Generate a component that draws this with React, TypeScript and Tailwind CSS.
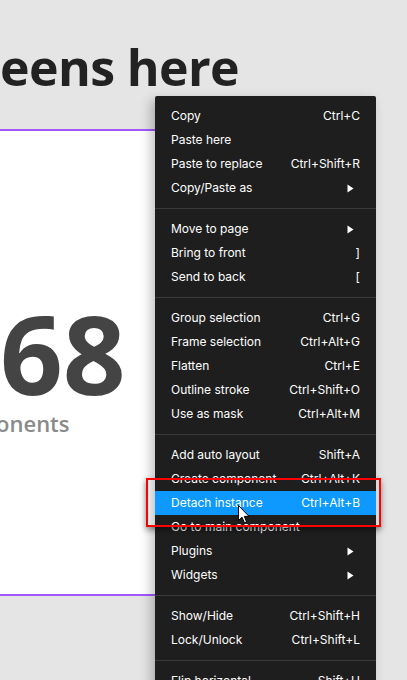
import React from "react"

type Item = { label: string; shortcut?: string; submenu?: boolean; active?: boolean }

const sections: Item[][] = [
  [
    { label: "Copy", shortcut: "Ctrl+C" },
    { label: "Paste here" },
    { label: "Paste to replace", shortcut: "Ctrl+Shift+R" },
    { label: "Copy/Paste as", submenu: true },
  ],
  [
    { label: "Move to page", submenu: true },
    { label: "Bring to front", shortcut: "]" },
    { label: "Send to back", shortcut: "[" },
  ],
  [
    { label: "Group selection", shortcut: "Ctrl+G" },
    { label: "Frame selection", shortcut: "Ctrl+Alt+G" },
    { label: "Flatten", shortcut: "Ctrl+E" },
    { label: "Outline stroke", shortcut: "Ctrl+Shift+O" },
    { label: "Use as mask", shortcut: "Ctrl+Alt+M" },
  ],
  [
    { label: "Add auto layout", shortcut: "Shift+A" },
    { label: "Create component", shortcut: "Ctrl+Alt+K" },
    { label: "Detach instance", shortcut: "Ctrl+Alt+B", active: true },
    { label: "Go to main component" },
    { label: "Plugins", submenu: true },
    { label: "Widgets", submenu: true },
  ],
  [
    { label: "Show/Hide", shortcut: "Ctrl+Shift+H" },
    { label: "Lock/Unlock", shortcut: "Ctrl+Shift+L" },
  ],
  [{ label: "Flip horizontal", shortcut: "Shift+H" }],
]

function MenuRow({ item }: { item: Item }) {
  return (
    <div
      className={`flex h-6 items-center justify-between pl-4 pr-4 text-[12px] text-white ${
        item.active ? "bg-[#0d99ff]" : ""
      }`}
    >
      <span>{item.label}</span>
      {item.submenu ? (
        <svg width="7" height="9" viewBox="0 0 7 9" className="mr-[6px]">
          <path d="M0.5 0.5 L6.5 4.5 L0.5 8.5 Z" fill="#ffffff" />
        </svg>
      ) : (
        item.shortcut && <span>{item.shortcut}</span>
      )}
    </div>
  )
}

function ContextMenu() {
  return (
    <div className="absolute left-[155px] top-[96px] w-[221px] rounded-[2px] bg-[#1e1e1e] shadow-[-4px_4px_12px_rgba(0,0,0,0.25)] font-['Inter',sans-serif]">
      {sections.map((section, i) => (
        <div key={i}>
          {i > 0 && <div className="h-px bg-[#3a3a3a]" />}
          <div className="py-2">
            {section.map((item) => (
              <MenuRow key={item.label} item={item} />
            ))}
          </div>
        </div>
      ))}
    </div>
  )
}

export default function App() {
  return (
    <div className="relative h-[680px] w-[407px] overflow-hidden bg-[#e5e5e5] font-['Open_Sans',sans-serif]">
      <h1 className="mt-[36px] text-[50px] font-bold leading-[62px] tracking-[-0.6px] text-[#222222]">
        eens here
      </h1>

      <div className="mt-[31px] h-[467px] w-[260px] overflow-hidden border-y-2 border-[#a259ff] bg-white">
        <div className="ml-[-63px] mt-[171px] text-[110px] font-bold leading-[100px] text-[#444444]">768</div>
        <div className="ml-[-66px] mt-[5px] text-[22px] font-semibold text-[#8a8a8a]">Components</div>
      </div>

      <ContextMenu />

      {/* annotation box */}
      <div className="absolute left-[146px] top-[478px] h-[49px] w-[235px] border-2 border-[#ff0000] shadow-[0_3px_6px_rgba(0,0,0,0.45)]" />

      {/* cursor */}
      <svg className="absolute left-[238px] top-[505px]" width="12" height="19" viewBox="0 0 12 19">
        <path
          d="M0.5 0.5 L0.5 15.5 L4 12.2 L6.4 17.8 L8.6 16.8 L6.3 11.4 L11 11.4 Z"
          fill="#ffffff"
          stroke="#000000"
          strokeWidth="1"
          strokeLinejoin="round"
        />
      </svg>
    </div>
  )
}
